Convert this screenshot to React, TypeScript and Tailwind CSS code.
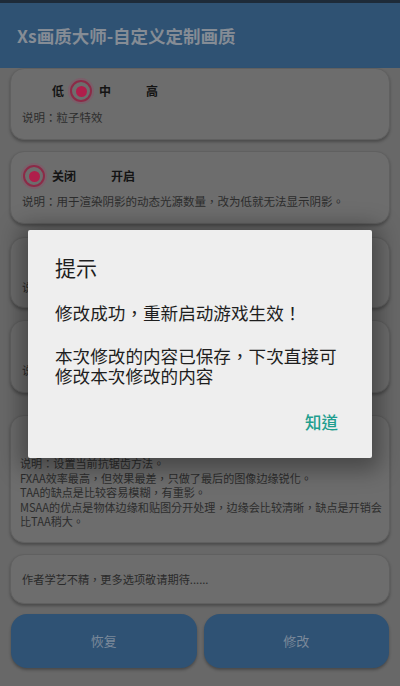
import React from "react";

const FONT = "font-['Noto_Sans_CJK_TC','Noto_Sans_CJK_SC',sans-serif]";

function Radio({ checked }: { checked?: boolean }) {
  return (
    <span className="flex h-[22px] w-[22px] shrink-0 items-center justify-center">
      {checked ? (
        <span className="flex h-[22px] w-[22px] items-center justify-center rounded-full border-[2.5px] border-[#8c2a47] shadow-[0_0_0_2px_rgba(150,70,100,0.35)]">
          <span className="h-[11px] w-[11px] rounded-full bg-[#b01e4b]" />
        </span>
      ) : null}
    </span>
  );
}

function Option({ label, checked }: { label: string; checked?: boolean }) {
  return (
    <div className="flex items-center">
      <Radio checked={checked} />
      <span className="ml-[7px] mr-[6px] text-[12px] font-bold leading-[22px] text-[#141414]">{label}</span>
    </div>
  );
}

function Card({
  className,
  children,
}: {
  className: string;
  children: React.ReactNode;
}) {
  return (
    <div
      className={`mx-[10px] rounded-[14px] border border-[#606060] bg-[#6d6d6d] shadow-[0_2px_3px_rgba(0,0,0,0.28)] ${className}`}
    >
      {children}
    </div>
  );
}

export default function App() {
  return (
    <div className={`relative h-[686px] w-[400px] overflow-hidden bg-[#686868] ${FONT}`}>
      {/* header */}
      <div className="flex h-[68px] flex-col bg-[#2f5273]">
        <div className="h-[3px] bg-[#1e2b39]" />
        <div className="flex flex-1 items-center pl-[17px] text-[17.5px] font-bold leading-[24px] text-[#858c95]">
          Xs画质大师-自定义定制画质
        </div>
      </div>

      {/* card 1 */}
      <Card className="h-[72px] pt-[11px]">
        <div className="flex pl-[12px]">
          <Option label="低" />
          <Option label="中" checked />
          <Option label="高" />
        </div>
        <div className="mt-[7px] pl-[11px] text-[11.5px] leading-[16px] text-[#2c2c2c]">说明：粒子特效</div>
      </Card>

      {/* card 2 */}
      <Card className="mt-[11px] h-[73px] pt-[13px]">
        <div className="flex pl-[12px]">
          <Option label="关闭" checked />
          <Option label="开启" />
        </div>
        <div className="mt-[6px] pl-[11px] text-[11.5px] leading-[16px] text-[#2c2c2c]">
          说明：用于渲染阴影的动态光源数量，改为低就无法显示阴影。
        </div>
      </Card>

      {/* card 3 (mostly under the dialog) */}
      <Card className="mt-[13px] h-[71px] pt-[13px]">
        <div className="h-[22px]" />
        <div className="mt-[6px] pl-[11px] text-[11.5px] leading-[16px] text-[#2c2c2c]">说明</div>
      </Card>

      {/* card 4 (mostly under the dialog) */}
      <Card className="mt-[12px] h-[73px] pt-[13px]">
        <div className="h-[22px]" />
        <div className="mt-[6px] pl-[11px] text-[11.5px] leading-[16px] text-[#2c2c2c]">说明</div>
      </Card>

      {/* card 5 */}
      <Card className="mt-[22px] h-[128px] pt-[13px]">
        <div className="h-[22px]" />
        <div className="mt-[5px] pl-[9px] pr-[4px] text-[11.1px] leading-[14.5px] text-[#2c2c2c]">
          <div>说明：设置当前抗锯齿方法。</div>
          <div>FXAA效率最高，但效果最差，只做了最后的图像边缘锐化。</div>
          <div>TAA的缺点是比较容易模糊，有重影。</div>
          <div>MSAA的优点是物体边缘和贴图分开处理，边缘会比较清晰，缺点是开销会比TAA稍大。</div>
        </div>
      </Card>

      {/* card 6 */}
      <Card className="mt-[11px] flex h-[50px] items-center">
        <div className="pl-[11px] text-[11.2px] text-[#2a2a2a]">作者学艺不精，更多选项敬请期待......</div>
      </Card>

      {/* buttons */}
      <div className="mx-[11px] mt-[10px] flex h-[54px] gap-[7px]">
        <div className="flex flex-1 items-center justify-center rounded-[16px] bg-[#2f5274] text-[13px] text-[#7b899a] shadow-[0_2px_3px_rgba(0,0,0,0.3)]">
          恢复
        </div>
        <div className="flex flex-1 items-center justify-center rounded-[16px] bg-[#2f5274] text-[13px] text-[#7b899a] shadow-[0_2px_3px_rgba(0,0,0,0.3)]">
          修改
        </div>
      </div>

      {/* dialog overlay */}
      <div className="absolute left-[28px] top-[230px] h-[228px] w-[344px] rounded-[2px] bg-[#eeeeee] pl-[27px] pt-[23px] text-[#1e1e1e] shadow-[0_4px_22px_8px_rgba(0,0,0,0.35)]">
        <div className="text-[21px] leading-[28px]">提示</div>
        <div className="mt-[22px] text-[17.6px] leading-[20px]">修改成功，重新启动游戏生效！</div>
        <div className="mt-[22.5px] text-[17.6px] leading-[20px]">
          本次修改的内容已保存，下次直接可
          <br />
          修改本次修改的内容
        </div>
        <div className="mt-[25.5px] flex justify-end pr-[34px]">
          <span className="text-[16.5px] font-medium leading-[22px] text-[#1f9e8f]">知道</span>
        </div>
      </div>
    </div>
  );
}
